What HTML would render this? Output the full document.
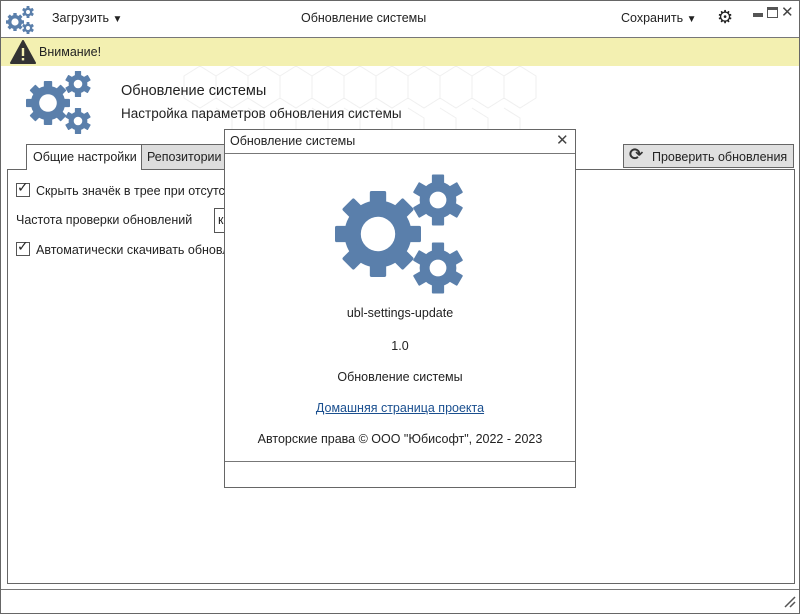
<!DOCTYPE html>
<html><head><meta charset="utf-8"><style>
*{margin:0;padding:0;box-sizing:border-box}
body{width:800px;height:614px;position:relative;background:#fff;font-family:"Liberation Sans","DejaVu Sans",sans-serif;font-size:12.5px;color:#222;overflow:hidden}
.a{position:absolute;white-space:nowrap}
.win{left:0;top:0;width:800px;height:614px;border:1px solid #666}
</style></head><body>
<svg width="0" height="0" style="position:absolute"><defs>
<g id="g8"><circle r="0.78" fill="#5a7fab"/>
<g fill="#5a7fab">
<rect x="-0.19" y="-1" width="0.38" height="0.5" rx="0.04"/>
<rect x="-0.19" y="-1" width="0.38" height="0.5" rx="0.04" transform="rotate(45)"/>
<rect x="-0.19" y="-1" width="0.38" height="0.5" rx="0.04" transform="rotate(90)"/>
<rect x="-0.19" y="-1" width="0.38" height="0.5" rx="0.04" transform="rotate(135)"/>
<rect x="-0.19" y="-1" width="0.38" height="0.5" rx="0.04" transform="rotate(180)"/>
<rect x="-0.19" y="-1" width="0.38" height="0.5" rx="0.04" transform="rotate(225)"/>
<rect x="-0.19" y="-1" width="0.38" height="0.5" rx="0.04" transform="rotate(270)"/>
<rect x="-0.19" y="-1" width="0.38" height="0.5" rx="0.04" transform="rotate(315)"/>
</g><circle r="0.4" fill="#fff"/></g>
<g id="g6"><circle r="0.72" fill="#5a7fab"/>
<g fill="#5a7fab">
<rect x="-0.24" y="-1" width="0.48" height="0.5" rx="0.04"/>
<rect x="-0.24" y="-1" width="0.48" height="0.5" rx="0.04" transform="rotate(60)"/>
<rect x="-0.24" y="-1" width="0.48" height="0.5" rx="0.04" transform="rotate(120)"/>
<rect x="-0.24" y="-1" width="0.48" height="0.5" rx="0.04" transform="rotate(180)"/>
<rect x="-0.24" y="-1" width="0.48" height="0.5" rx="0.04" transform="rotate(240)"/>
<rect x="-0.24" y="-1" width="0.48" height="0.5" rx="0.04" transform="rotate(300)"/>
</g><circle r="0.33" fill="#fff"/></g>
</defs></svg>
<div class="a win"></div>
<!-- header -->
<svg class="a" style="left:0;top:0" width="40" height="37"><use href="#g8" transform="translate(15,22) scale(9)"/><use href="#g6" transform="translate(28,12) scale(6)"/><use href="#g6" transform="translate(28,28) scale(6)"/></svg>
<div class="a" style="left:52px;top:11px">Загрузить <span style="font-size:10px">▼</span></div>
<div class="a" style="left:301px;top:11px">Обновление системы</div>
<div class="a" style="left:621px;top:11px">Сохранить <span style="font-size:10px">▼</span></div>
<div class="a" style="left:717px;top:7px;font-size:18px;color:#222">⚙</div>
<div class="a" style="left:753px;top:13px;width:10px;height:4px;background:#555"></div>
<div class="a" style="left:767px;top:7px;width:11px;height:11px;border:1.5px solid #555;border-top-width:3px"></div>
<div class="a" style="left:781px;top:3px;font-size:15px;color:#444">✕</div>
<div class="a" style="left:1px;top:37px;width:798px;height:1px;background:#777"></div>
<div class="a" style="left:1px;top:38px;width:798px;height:28px;background:#f3f0b1"></div>
<svg class="a" style="left:10px;top:40px" width="26" height="24"><path d="M13 1 L25 23 L1 23 Z" fill="#333" stroke="#333" stroke-linejoin="round" stroke-width="2"/><rect x="11.8" y="8" width="2.4" height="8" fill="#f3f0b1"/><rect x="11.8" y="18" width="2.4" height="2.4" fill="#f3f0b1"/></svg>
<div class="a" style="left:39px;top:45px">Внимание!</div>
<!-- hex bg -->
<svg class="a" style="left:180px;top:66px" width="440" height="70" opacity="0.15"><g fill="none" stroke="#999" stroke-width="1">
<path d="M20 0 l16 10 v22 l-16 10 l-16 -10 v-22z M52 0 l16 10 v22 l-16 10 l-16 -10 v-22z M84 0 l16 10 v22 l-16 10 l-16 -10 v-22z M116 0 l16 10 v22 l-16 10 l-16 -10 v-22z M148 0 l16 10 v22 l-16 10 l-16 -10 v-22z M180 0 l16 10 v22 l-16 10 l-16 -10 v-22z M212 0 l16 10 v22 l-16 10 l-16 -10 v-22z M244 0 l16 10 v22 l-16 10 l-16 -10 v-22z M276 0 l16 10 v22 l-16 10 l-16 -10 v-22z M308 0 l16 10 v22 l-16 10 l-16 -10 v-22z M340 0 l16 10 v22 l-16 10 l-16 -10 v-22z"/>
<path d="M36 42 l16 10 v22 M68 42 l16 10 v22 M100 42 l16 10 v22 M132 42 l16 10 v22 M164 42 l16 10 v22 M196 42 l16 10 v22 M228 42 l16 10 v22 M260 42 l16 10 v22 M292 42 l16 10 v22 M324 42 l16 10 v22"/>
</g></svg>
<svg class="a" style="left:20px;top:70px" width="80" height="66"><use href="#g8" transform="translate(28,33) scale(22)"/><use href="#g6" transform="translate(58,14) scale(13)"/><use href="#g6" transform="translate(58,51) scale(13)"/></svg>
<div class="a" style="left:121px;top:83px;font-size:14.5px">Обновление системы</div>
<div class="a" style="left:121px;top:106px;font-size:13.5px">Настройка параметров обновления системы</div>
<!-- tabs -->
<div class="a" style="left:7px;top:169px;width:788px;height:415px;border:1px solid #666"></div>
<div class="a" style="left:26px;top:144px;width:116px;height:26px;border:1px solid #666;border-bottom:none;background:#fff;padding:5px 6px">Общие настройки</div>
<div class="a" style="left:141px;top:144px;width:90px;height:26px;border:1px solid #666;background:#ddd;padding:5px 5px">Репозитории</div>
<div class="a" style="left:623px;top:144px;width:171px;height:24px;border:1px solid #666;background:#e0e0e0;padding:5px 0 0 28px">Проверить обновления</div>
<div class="a" style="left:629px;top:145px;font-size:17px;font-weight:bold;color:#333">⟳</div>
<div class="a" style="left:16px;top:183px;width:14px;height:14px;border:1px solid #555"></div>
<div class="a" style="left:17px;top:179px;font-size:14px">✓</div>
<div class="a" style="left:36px;top:184px">Скрыть значёк в трее при отсутствии</div>
<div class="a" style="left:16px;top:213px">Частота проверки обновлений</div>
<div class="a" style="left:214px;top:208px;width:60px;height:25px;border:1px solid #555;padding:4px 3px">к</div>
<div class="a" style="left:16px;top:242px;width:14px;height:14px;border:1px solid #555"></div>
<div class="a" style="left:17px;top:238px;font-size:14px">✓</div>
<div class="a" style="left:36px;top:243px">Автоматически скачивать обновления</div>
<div class="a" style="left:1px;top:589px;width:798px;height:1px;background:#777"></div>
<svg class="a" style="left:784px;top:596px" width="12" height="12"><path d="M1 11 L11 1 M6 11 L11 6" stroke="#555" stroke-width="1.5"/></svg>
<!-- dialog -->
<div class="a" style="left:224px;top:129px;width:352px;height:359px;border:1px solid #666;background:#fff"></div>
<div class="a" style="left:225px;top:153px;width:350px;height:1px;background:#777"></div>
<div class="a" style="left:230px;top:134px">Обновление системы</div>
<div class="a" style="left:556px;top:131px;font-size:15px;color:#444">✕</div>
<svg class="a" style="left:330px;top:170px" width="140" height="126"><use href="#g8" transform="translate(48,64) scale(43)"/><use href="#g6" transform="translate(108,30) scale(25.5)"/><use href="#g6" transform="translate(108,98) scale(25.5)"/></svg>
<div class="a" style="left:224px;top:306px;width:352px;text-align:center">ubl-settings-update</div>
<div class="a" style="left:224px;top:339px;width:352px;text-align:center">1.0</div>
<div class="a" style="left:224px;top:370px;width:352px;text-align:center">Обновление системы</div>
<div class="a" style="left:224px;top:401px;width:352px;text-align:center;color:#1a4f8f;text-decoration:underline">Домашняя страница проекта</div>
<div class="a" style="left:224px;top:432px;width:352px;text-align:center">Авторские права © ООО "Юбисофт", 2022 - 2023</div>
<div class="a" style="left:225px;top:461px;width:350px;height:1px;background:#777"></div>
</body></html>
